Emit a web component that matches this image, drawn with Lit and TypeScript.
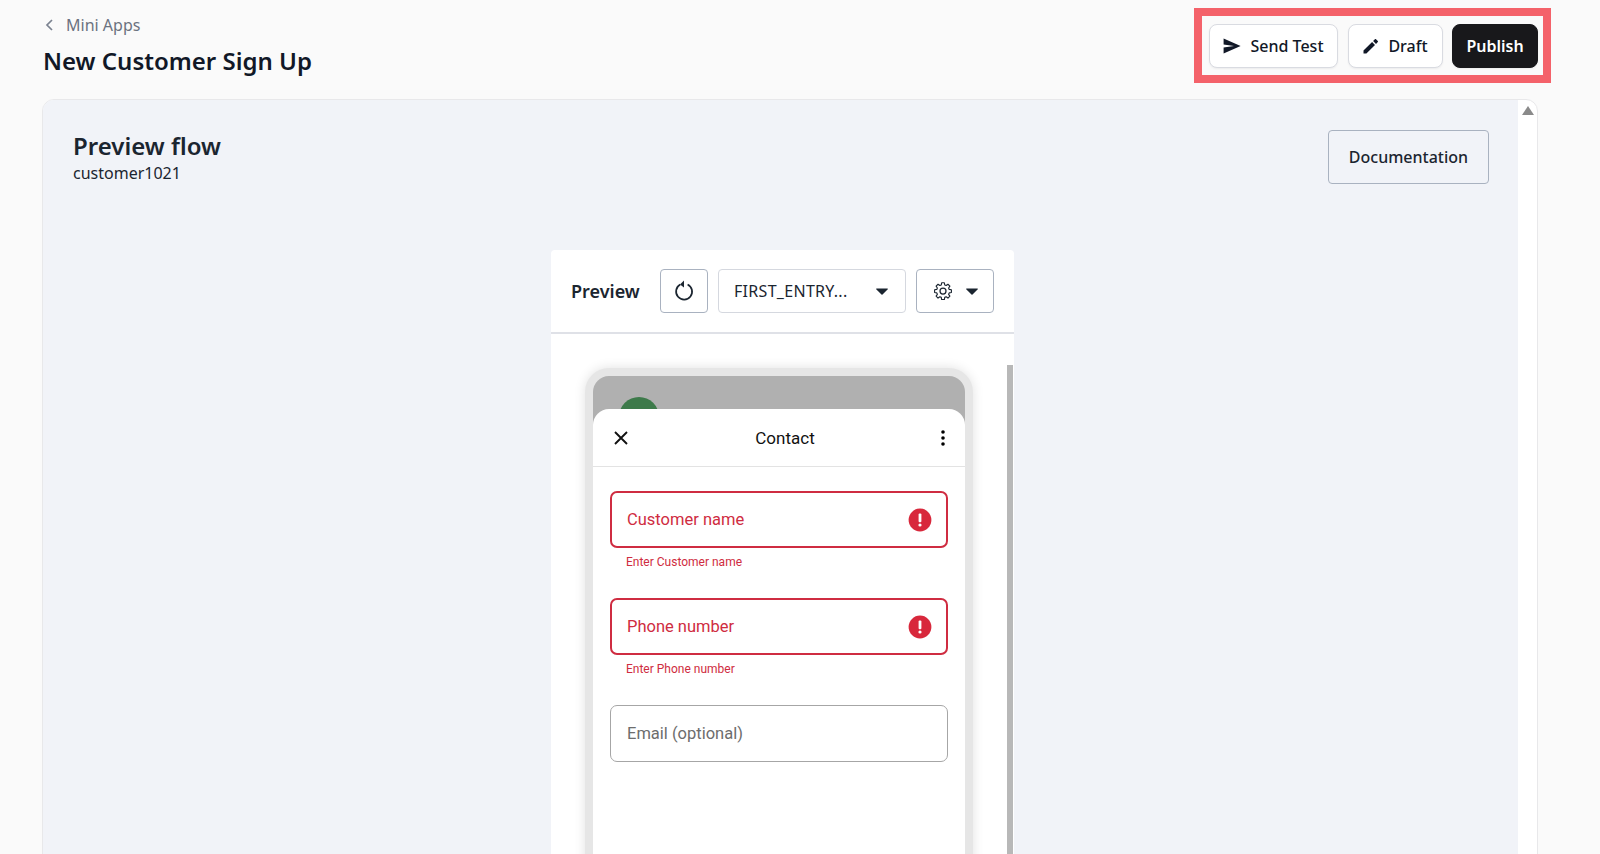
import { LitElement, html, css, svg } from "lit";
import { customElement } from "lit/decorators.js";

const caret = svg`<svg class="caret" width="12" height="7" viewBox="0 0 12 7"><path d="M.6.4h10.8c.5 0 .7.5.4.9L6.5 6.5a.7.7 0 0 1-1 0L.2 1.3C-.1.9.1.4.6.4z" fill="#1b2530"/></svg>`;

const alert = svg`<svg class="alert" width="24" height="24" viewBox="0 0 24 24"><circle cx="12" cy="12" r="11.4" fill="#d8283c"/><rect x="10.6" y="5.6" width="2.8" height="8.6" rx="1" fill="#fff"/><circle cx="12" cy="17" r="1.6" fill="#fff"/></svg>`;

@customElement("app-root")
class AppRoot extends LitElement {
  static styles = css`
    :host {
      display: block;
      height: 854px;
      overflow: hidden;
      background: #fafafa;
      font-family: "Noto Sans", sans-serif;
      color: #111827;
    }

    * {
      box-sizing: border-box;
    }

    .top {
      display: flex;
      justify-content: space-between;
      padding: 14px 62px 0 43px;
      height: 99px;
    }

    .crumb {
      display: flex;
      align-items: center;
      gap: 12px;
      font-size: 16px;
      line-height: 22px;
      color: #6b7280;
      padding-left: 1px;
    }

    h1 {
      margin: 9px 0 0;
      font-size: 24px;
      line-height: 32px;
      font-weight: 600;
    }

    .actions {
      position: relative;
      display: flex;
      align-items: flex-start;
      gap: 10px;
      margin-top: 10px;
      height: 44px;
    }

    .actions::after {
      content: "";
      position: absolute;
      inset: -16px -13px -15px -15px;
      border: 8px solid #f4626a;
      pointer-events: none;
    }

    button {
      display: flex;
      align-items: center;
      justify-content: center;
      font-family: inherit;
      color: inherit;
      background: #fff;
      padding: 0;
    }

    .action {
      height: 44px;
      gap: 9px;
      font-size: 16px;
      font-weight: 500;
      border: 1px solid #d9dbe1;
      border-radius: 8px;
      box-shadow: 0 1px 2px rgba(17, 24, 39, 0.06);
    }

    .send {
      width: 129px;
    }

    .draft {
      width: 95px;
    }

    .publish {
      width: 86px;
      margin-left: -1px;
      background: #18181b;
      border-color: #18181b;
      color: #fff;
      font-weight: 600;
    }

    .card {
      display: flex;
      margin: 0 62px 0 42px;
      height: 800px;
      background: #fff;
      border: 1px solid #e8e8ea;
      border-radius: 12px 12px 0 0;
      overflow: hidden;
    }

    .main {
      flex: 1;
      min-width: 0;
      background: #f1f3f8;
      padding: 30px 29px 0 30px;
    }

    .track {
      width: 19px;
      padding: 6px 0 0 4px;
    }

    .track svg {
      display: block;
    }

    .head {
      display: flex;
      justify-content: space-between;
      align-items: flex-start;
    }

    h2 {
      margin: 0;
      font-size: 24px;
      line-height: 32px;
      font-weight: 600;
      color: #1b2530;
    }

    .sub {
      font-size: 16px;
      line-height: 20px;
      margin-top: 1px;
      color: #1b2530;
    }

    .doc {
      width: 161px;
      height: 54px;
      font-size: 16px;
      font-weight: 500;
      color: #1b2530;
      background: #f1f3f8;
      border: 1px solid #a9b2c0;
      border-radius: 4px;
    }

    .panel {
      width: 463px;
      margin: 66px 0 0 478px;
      background: #fff;
      border-radius: 4px 4px 0 0;
    }

    .bar {
      display: flex;
      align-items: center;
      height: 84px;
      padding: 19px 20px 19px 20px;
      border-bottom: 2px solid #dfe1e7;
      color: #1b2530;
    }

    .bar-title {
      font-size: 18px;
      font-weight: 600;
      width: 89px;
    }

    .ctl {
      height: 44px;
      background: #fff;
      border: 1px solid #a9b2c0;
      border-radius: 4px;
    }

    .reset {
      width: 48px;
    }

    .select {
      width: 188px;
      margin-left: 10px;
      padding: 0 17px 0 15px;
      justify-content: space-between;
      border-color: #d5d8df;
      font-size: 16px;
      letter-spacing: 0.3px;
      color: #1b2530;
    }

    .gear {
      width: 78px;
      margin-left: 10px;
      gap: 13px;
    }

    .body {
      display: flex;
      height: 600px;
    }

    .phone-wrap {
      flex: 1;
      padding: 34px 0 0 34px;
    }

    .scroll {
      width: 6px;
      margin: 31px 1px 0 0;
      background: #b8b8b8;
    }

    .phone {
      width: 388px;
      height: 600px;
      padding: 8px;
      background: #e6e6e6;
      border-radius: 24px 24px 0 0;
      box-shadow: 0 0 12px rgba(0, 0, 0, 0.12);
    }

    .screen {
      height: 100%;
      background: #b0b0b0;
      border-radius: 16px 16px 0 0;
      padding: 21px 0 0 0;
      overflow: hidden;
    }

    .avatar {
      width: 40px;
      height: 40px;
      margin-left: 26px;
      margin-bottom: -28px;
      border-radius: 50%;
      background: #3d7a4a;
    }

    .sheet {
      position: relative;
      height: 100%;
      background: #fff;
      border-radius: 16px 16px 0 0;
      font-family: Roboto, sans-serif;
    }

    .sheet-head {
      display: flex;
      align-items: center;
      justify-content: space-between;
      height: 58px;
      padding: 0 20px 0 20px;
      border-bottom: 1px solid #e3e3e3;
      font-size: 17px;
      color: #111;
    }

    .sheet-head span {
      letter-spacing: 0;
    }

    .form {
      padding: 24px 17px 0;
    }

    .field {
      display: flex;
      align-items: center;
      justify-content: space-between;
      height: 57px;
      padding: 0 15px 0 16px;
      border: 1px solid #a6a6a6;
      border-radius: 7px;
      font-size: 16.5px;
      color: #6d6d6d;
    }

    .field.error {
      border: 2px solid #cf2c41;
      padding: 0 14px 0 15px;
      color: #cf2c41;
    }

    .help {
      height: 50px;
      padding: 6px 0 0 16px;
      font-size: 12px;
      line-height: 16px;
      color: #cf2c41;
    }
  `;

  render() {
    return html`
      <div class="top">
        <div>
          <div class="crumb">
            <svg width="10" height="16" viewBox="0 0 10 16"><path d="M8 3 3 8l5 5" fill="none" stroke="#7b8290" stroke-width="1.7"/></svg>
            Mini Apps
          </div>
          <h1>New Customer Sign Up</h1>
        </div>
        <div class="actions">
          <button class="action send">
            <svg width="18" height="16" viewBox="0 0 18 16"><path d="M.6.4 17.6 8 .6 15.6l0-6L11 8 .6 6.4z" fill="#111827"/></svg>
            Send Test
          </button>
          <button class="action draft">
            <svg width="16" height="16" viewBox="0 0 16 16"><path d="M.5 12.6v2.9h2.9L12 6.9 9.1 4zM14.8 4.1c.3-.3.3-.8 0-1.1L13 1.2c-.3-.3-.8-.3-1.1 0l-1.8 1.8L13 5.9z" fill="#111827"/></svg>
            Draft
          </button>
          <button class="action publish">Publish</button>
        </div>
      </div>
      <div class="card">
        <div class="main">
          <div class="head">
            <div>
              <h2>Preview flow</h2>
              <div class="sub">customer1021</div>
            </div>
            <button class="doc">Documentation</button>
          </div>
          <div class="panel">
            <div class="bar">
              <div class="bar-title">Preview</div>
              <button class="ctl reset">
                <svg width="20" height="22" viewBox="0 0 20 22"><path d="M6.2 4.6a8 8 0 1 0 7.4-.2" fill="none" stroke="#1b2530" stroke-width="1.7"/><path d="M10 .6v7L6 4.4z" fill="#1b2530"/></svg>
              </button>
              <button class="ctl select">FIRST_ENTRY...${caret}</button>
              <button class="ctl gear">
                <svg width="20" height="20" viewBox="0 0 24 24" fill="none" stroke="#1b2530" stroke-width="1.5" stroke-linejoin="round"><path d="M10 2.5h4l.6 3 2.3 1 2.6-1.6 2.8 2.8-1.6 2.6 1 2.3 3 .6" transform="translate(-1.2 0)" opacity="0"/><path d="M10.2 2h3.6l.5 2.9 1.9.8 2.4-1.7 2.6 2.6-1.7 2.4.8 1.9 2.9.5v3.6l-2.9.5-.8 1.9 1.7 2.4-2.6 2.6-2.4-1.7-1.9.8-.5 2.9h-3.6l-.5-2.9-1.9-.8-2.4 1.7-2.6-2.6 1.7-2.4-.8-1.9-2.9-.5v-3.6l2.9-.5.8-1.9-1.7-2.4 2.6-2.6 2.4 1.7 1.9-.8z" transform="translate(12 12) scale(.9) translate(-12 -13)"/><circle cx="12" cy="12" r="3.6"/></svg>
                ${caret}
              </button>
            </div>
            <div class="body">
              <div class="phone-wrap">
                <div class="phone">
                  <div class="screen">
                    <div class="avatar"></div>
                    <div class="sheet">
                      <div class="sheet-head">
                        <svg width="16" height="16" viewBox="0 0 16 16"><path d="M2 2l12 12M14 2 2 14" stroke="#111" stroke-width="1.9"/></svg>
                        <span>Contact</span>
                        <svg width="4" height="16" viewBox="0 0 4 16"><circle cx="2" cy="2" r="1.8"/><circle cx="2" cy="8" r="1.8"/><circle cx="2" cy="14" r="1.8"/></svg>
                      </div>
                      <div class="form">
                        <div class="field error">Customer name ${alert}</div>
                        <div class="help">Enter Customer name</div>
                        <div class="field error">Phone number ${alert}</div>
                        <div class="help">Enter Phone number</div>
                        <div class="field">Email (optional)</div>
                      </div>
                    </div>
                  </div>
                </div>
              </div>
              <div class="scroll"></div>
            </div>
          </div>
        </div>
        <div class="track">
          <svg width="12" height="9" viewBox="0 0 12 9"><path d="M6 0l6 9H0z" fill="#8a8a8a"/></svg>
        </div>
      </div>
    `;
  }
}

export { AppRoot };
